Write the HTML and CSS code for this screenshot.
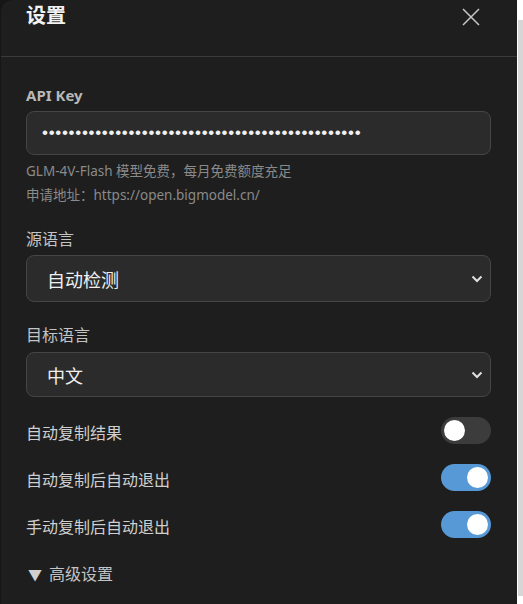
FILE: index.html
```html
<!DOCTYPE html>
<html lang="zh-CN">
<head>
  <meta charset="UTF-8">
  <title>设置</title>
  <link rel="stylesheet" href="styles.css">
</head>
<body>
<div class="panel">
  <div class="header">
    <h2 class="title">设置</h2>
    <button class="close" aria-label="关闭">
      <svg width="20" height="20" viewBox="0 0 20 20">
        <path d="M2 2 L18 18 M18 2 L2 18" stroke="#c8c8c8" stroke-width="1.5" fill="none"/>
      </svg>
    </button>
  </div>

  <div class="content">
    <label class="label strong" for="apiKey">API Key</label>
    <input id="apiKey" class="field" type="password" value="abcdefghijklmnopqrstuvwxyz0123456789abcdefghijkl">
    <div class="hint">GLM-4V-Flash 模型免费，每月免费额度充足</div>
    <div class="hint">申请地址：https://open.bigmodel.cn/</div>

    <label class="label group" for="sourceLang">源语言</label>
    <select id="sourceLang" class="field select">
      <option>自动检测</option>
    </select>

    <label class="label group" for="targetLang">目标语言</label>
    <select id="targetLang" class="field select">
      <option>中文</option>
    </select>

    <div class="toggles">
      <div class="row">
        <span>自动复制结果</span>
        <span class="switch"></span>
      </div>
      <div class="row">
        <span>自动复制后自动退出</span>
        <span class="switch on"></span>
      </div>
      <div class="row">
        <span>手动复制后自动退出</span>
        <span class="switch on"></span>
      </div>
    </div>

    <details class="advanced">
      <summary><span class="marker">▼</span>高级设置</summary>
    </details>
  </div>
</div>
<div class="scrollbar"><div class="thumb"></div></div>
</body>
</html>
```

FILE: styles.css
```css
html, body {
  margin: 0;
  padding: 0;
  height: 100%;
}

body {
  display: flex;
  background: #161616;
  font-family: "Noto Sans", "Noto Sans CJK SC", sans-serif;
  overflow: hidden;
}

.panel {
  flex: 1;
  margin-left: 1px;
  background: #1e1e1e;
  border-top-left-radius: 12px;
  color: #cfcfcf;
}

.scrollbar {
  width: 6px;
  background: #ffffff;
  padding: 20px 0 8px 1px;
  box-sizing: border-box;
}

.thumb {
  height: 100%;
  background: #d6d6d6;
}

.header {
  box-sizing: border-box;
  height: 57px;
  border-bottom: 1px solid #3a3a3a;
  display: flex;
  justify-content: space-between;
  align-items: flex-start;
  padding: 3px 36px 0 25px;
}

.title {
  margin: 0;
  font-size: 20px;
  line-height: 26px;
  font-weight: bold;
  color: #f2f2f2;
}

.close {
  background: none;
  border: none;
  padding: 0;
  margin-top: 4px;
  cursor: pointer;
}

.content {
  padding: 28px 26px 0 25px;
}

.label {
  display: block;
  font-size: 16px;
  line-height: 20px;
  color: #c4c4c4;
  margin-bottom: 6px;
}

.label.strong {
  font-size: 15px;
  font-weight: bold;
  color: #b8b8b8;
}

.label.group {
  margin-top: 22px;
}

.select + .label.group {
  margin-top: 23px;
  margin-bottom: 7px;
}

.field {
  display: block;
  width: 100%;
  box-sizing: border-box;
  background: #2b2b2b;
  border: 1px solid #454545;
  border-radius: 8px;
  color: #f0f0f0;
  outline: none;
}

input.field {
  height: 44px;
  padding: 0 15px;
  font-size: 17px;
  letter-spacing: 0.7px;
}

.select {
  -webkit-appearance: none;
  appearance: none;
  height: 47px;
  padding: 0 40px 0 20px;
  font-size: 18px;
  font-family: "Noto Sans CJK SC", sans-serif;
  background: #2b2b2b url("data:image/svg+xml,%3Csvg xmlns='http://www.w3.org/2000/svg' width='12' height='8' viewBox='0 0 12 8'%3E%3Cpath d='M1.5 1.5 L6 6 L10.5 1.5' stroke='%23e0e0e0' stroke-width='2' fill='none'/%3E%3C/svg%3E") no-repeat right 7px center;
}

#targetLang {
  height: 45px;
}

.hint {
  font-size: 13.5px;
  line-height: 24px;
  color: #8a8a8a;
}

.field + .hint {
  margin-top: 4px;
}

.toggles {
  margin-top: 20px;
  display: flex;
  flex-direction: column;
  gap: 20px;
}

.row {
  display: flex;
  justify-content: space-between;
  align-items: center;
  height: 27px;
  font-size: 16px;
  color: #cfcfcf;
}

.row span:first-child {
  position: relative;
  top: 1px;
}

.switch {
  position: relative;
  width: 50px;
  height: 27px;
  border-radius: 14px;
  background: #3c3c3c;
}

.switch::after {
  content: "";
  position: absolute;
  top: 3px;
  left: 3px;
  width: 21px;
  height: 21px;
  border-radius: 50%;
  background: #ffffff;
}

.switch.on {
  background: #5799d6;
}

.switch.on::after {
  left: 26px;
}

.advanced {
  margin-top: 26px;
}

.advanced summary {
  list-style: none;
  font-size: 16px;
  line-height: 20px;
  color: #c4c4c4;
  cursor: pointer;
  padding-left: 2px;
}

.advanced summary::-webkit-details-marker {
  display: none;
}

.marker {
  display: inline-block;
  width: 21px;
  font-size: 14px;
  color: #d0d0d0;
}
```
